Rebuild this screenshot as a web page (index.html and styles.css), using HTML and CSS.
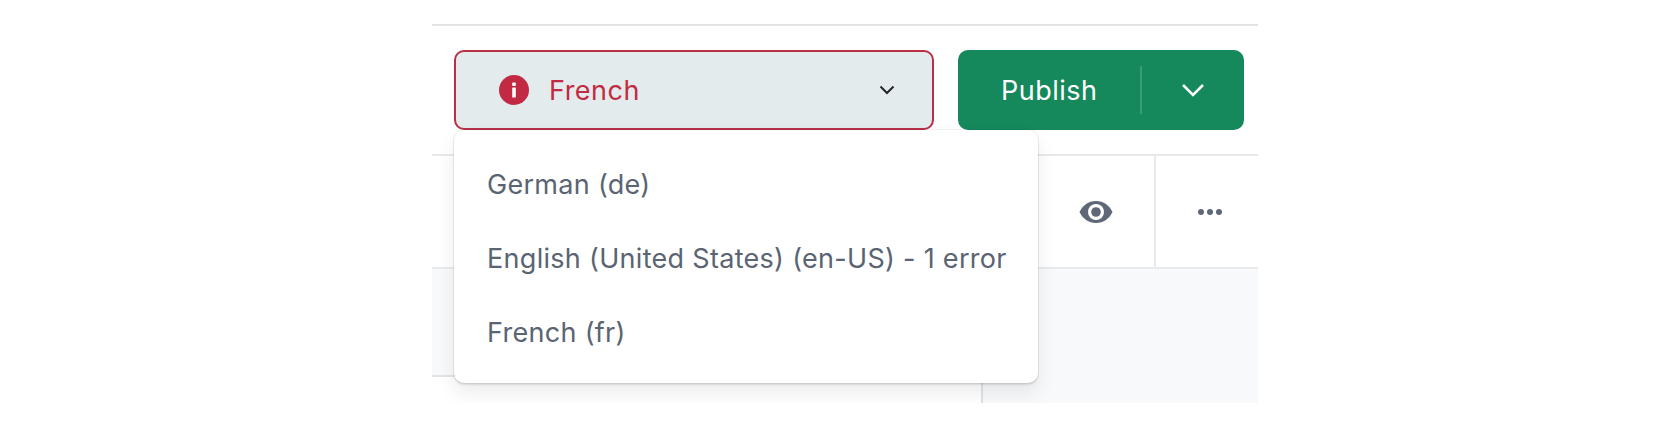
FILE: index.html
```html
<!DOCTYPE html>
<html>
  <head>
    <meta charset="UTF-8" />
    <title>Publish</title>
    <link rel="stylesheet" href="styles.css">
  </head>
  <body>
    <div class="frame">
      <div class="toolbar">
        <div class="locale">
          <div class="locale-select">
            <svg class="info" viewBox="0 0 30 30">
              <circle cx="15" cy="15" r="15" fill="#c22a43" />
              <rect x="13.200" y="7.500" width="3.600" height="3.500" rx="0.800" fill="#fff" />
              <rect x="13.200" y="12.500" width="3.600" height="10" rx="0.500" fill="#fff" />
            </svg>
            <span class="locale-name">French</span>
            <svg class="chevron" viewBox="0 0 16 10">
              <path d="M1.500 1.500 8 8l6.500-6.500" fill="none" stroke="#20262c" stroke-width="2" />
            </svg>
          </div>
          <ul class="menu">
            <li>German (de)</li>
            <li>English (United States) (en-US) - 1 error</li>
            <li>French (fr)</li>
          </ul>
        </div>
        <div class="publish">
          <span class="publish-label">Publish</span>
          <span class="publish-more">
            <svg class="chevron-white" viewBox="0 0 24 14">
              <path d="M2 2l10 10L22 2" fill="none" stroke="#fff" stroke-width="2.600" />
            </svg>
          </span>
        </div>
      </div>
      <div class="actions">
        <div class="action">
          <svg class="eye" viewBox="0 0 34 22">
            <path d="M17 0C9.500 0 3.500 4.600 0.500 11 3.500 17.400 9.500 22 17 22s13.500-4.600 16.500-11C30.500 4.600 24.500 0 17 0z" fill="#5f6876" />
            <circle cx="17" cy="11" r="8" fill="#fff" />
            <circle cx="17" cy="11" r="4.800" fill="#5f6876" />
          </svg>
        </div>
        <div class="action action-more">
          <span class="dot"></span>
          <span class="dot"></span>
          <span class="dot"></span>
        </div>
      </div>
      <div class="panels">
        <div class="panel-left">
          <div class="panel-shade"></div>
        </div>
        <div class="panel-right"></div>
      </div>
    </div>
  </body>
</html>
```

FILE: styles.css
```css
* {
  margin: 0;
  padding: 0;
  box-sizing: border-box;
}
body {
  font-family: Inter, "Liberation Sans", sans-serif;
  font-size: 27px;
  letter-spacing: 0.5px;
  background: #fff;
  overflow: hidden;
}
.frame {
  width: 826px;
  height: 403px;
  margin-left: 432px;
  padding-top: 24px;
  overflow: hidden;
  display: flex;
  flex-direction: column;
}

/* top bar */
.toolbar {
  height: 132px;
  flex: none;
  display: flex;
  gap: 24px;
  padding: 24px 14px 0 22px;
  border-top: 2px solid #e2e3e4;
  border-bottom: 2px solid #e8eaeb;
}
.locale {
  position: relative;
  width: 480px;
  height: 80px;
}
.locale-select {
  height: 80px;
  display: flex;
  align-items: center;
  padding: 0 37px 0 43px;
  background: #e4ebed;
  border: 2px solid #b92f48;
  border-radius: 10px;
}
.info {
  width: 30px;
  height: 30px;
}
.locale-name {
  margin-left: 20px;
  flex: 1;
  color: #c22a43;
}
.chevron {
  width: 16px;
  height: 10px;
}

/* dropdown */
.menu {
  position: absolute;
  top: 80px;
  left: 0;
  width: 584px;
  height: 253px;
  padding: 17px 0 14px;
  list-style: none;
  background: #fff;
  border-radius: 10px;
  letter-spacing: 0.3px;
  box-shadow: 0 0 0 1px rgba(0, 0, 0, 0.05), 0 2px 2px rgba(0, 0, 0, 0.1), 0 10px 20px rgba(0, 0, 0, 0.08);
}
.menu li {
  height: 74px;
  display: flex;
  align-items: center;
  padding-left: 33px;
  color: #5a6472;
  white-space: nowrap;
}

/* publish button */
.publish {
  width: 286px;
  height: 80px;
  display: flex;
  align-items: center;
  background: #15885c;
  border-radius: 10px;
  color: #fff;
}
.publish-label {
  width: 184px;
  height: 48px;
  display: flex;
  align-items: center;
  padding-left: 43px;
  border-right: 2px solid #3b9d78;
}
.publish-more {
  flex: 1;
  display: flex;
  justify-content: center;
}
.chevron-white {
  width: 24px;
  height: 14px;
}

/* icon row */
.actions {
  height: 113px;
  flex: none;
  display: flex;
  justify-content: flex-end;
  border-bottom: 2px solid #e8eaeb;
}
.action {
  width: 117px;
  display: flex;
  align-items: center;
  justify-content: center;
  gap: 3px;
}
.action-more {
  width: 104px;
  padding-left: 6px;
  border-left: 2px solid #e8eaeb;
}
.eye {
  width: 34px;
  height: 22px;
}
.dot {
  width: 6px;
  height: 6px;
  border-radius: 50%;
  background: #5f6876;
}

/* lower panels */
.panels {
  flex: 1;
  display: flex;
}
.panel-left {
  width: 551px;
  border-right: 2px solid #dfe3e6;
}
.panel-shade {
  height: 108px;
  background: #f7f9fa;
  border-bottom: 2px solid #e2e5e7;
}
.panel-right {
  flex: 1;
  background: #f7f9fa;
}
```
